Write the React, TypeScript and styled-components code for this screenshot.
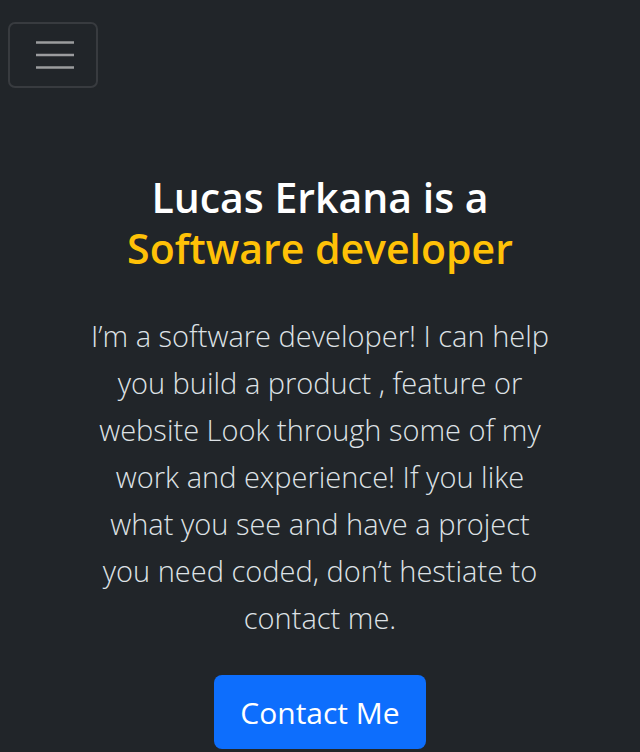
import React from "react";
import styled, { createGlobalStyle } from "styled-components";

const GlobalStyle = createGlobalStyle`
  html, body {
    margin: 0;
    padding: 0;
    background: #212529;
  }
  body {
    font-family: "Open Sans", "Noto Sans", sans-serif;
    color: #dee2e6;
  }
  * { box-sizing: border-box; }
`;

const Page = styled.div`
  min-height: 752px;
  background: #212529;
  display: flex;
  flex-direction: column;
`;

const NavBar = styled.nav`
  display: flex;
  align-items: center;
  padding: 22px 8px 0;
`;

const Toggler = styled.button`
  width: 90px;
  height: 66px;
  display: flex;
  align-items: center;
  justify-content: center;
  background: transparent;
  border: 2px solid #383b3f;
  border-radius: 7px;
  padding: 0 0 0 3px;
  cursor: pointer;
`;

const Hero = styled.section`
  display: flex;
  flex-direction: column;
  align-items: center;
  text-align: center;
  padding: 84px 24px 0;
`;

const Heading = styled.h1`
  margin: 0;
  display: flex;
  flex-direction: column;
  font-size: 41px;
  line-height: 51px;
  font-weight: 600;
  color: #ffffff;
`;

const HeadLine = styled.span<{ $accent?: boolean }>`
  display: block;
  color: ${(p) => (p.$accent ? "#ffc107" : "#ffffff")};
`;

const Lead = styled.p`
  margin: 38px 0 0;
  max-width: 468px;
  font-size: 29px;
  line-height: 47px;
  font-weight: 300;
  color: #dee2e6;
`;

const ContactButton = styled.button`
  margin-top: 34px;
  width: 212px;
  height: 74px;
  background: #0d6efd;
  border: none;
  border-radius: 8px;
  color: #ffffff;
  font-family: "Open Sans", "Noto Sans", sans-serif;
  font-size: 30px;
  font-weight: 400;
  cursor: pointer;
`;

const MenuIcon = () => (
  <svg width="38" height="28" viewBox="0 0 38 28" aria-hidden="true">
    <g stroke="#9b9c9e" strokeWidth="2.5" strokeLinecap="butt">
      <line x1="0" y1="1.5" x2="38" y2="1.5" />
      <line x1="0" y1="14" x2="38" y2="14" />
      <line x1="0" y1="26.5" x2="38" y2="26.5" />
    </g>
  </svg>
);

export default function App() {
  return (
    <Page>
      <GlobalStyle />
      <NavBar>
        <Toggler aria-label="Toggle navigation">
          <MenuIcon />
        </Toggler>
      </NavBar>
      <Hero>
        <Heading>
          <HeadLine>Lucas Erkana is a</HeadLine>
          <HeadLine $accent>Software developer</HeadLine>
        </Heading>
        <Lead>
          I’m a software developer! I can help you build a product , feature or
          website Look through some of my work and experience! If you like what
          you see and have a project you need coded, don’t hestiate to contact
          me.
        </Lead>
        <ContactButton>Contact Me</ContactButton>
      </Hero>
    </Page>
  );
}
